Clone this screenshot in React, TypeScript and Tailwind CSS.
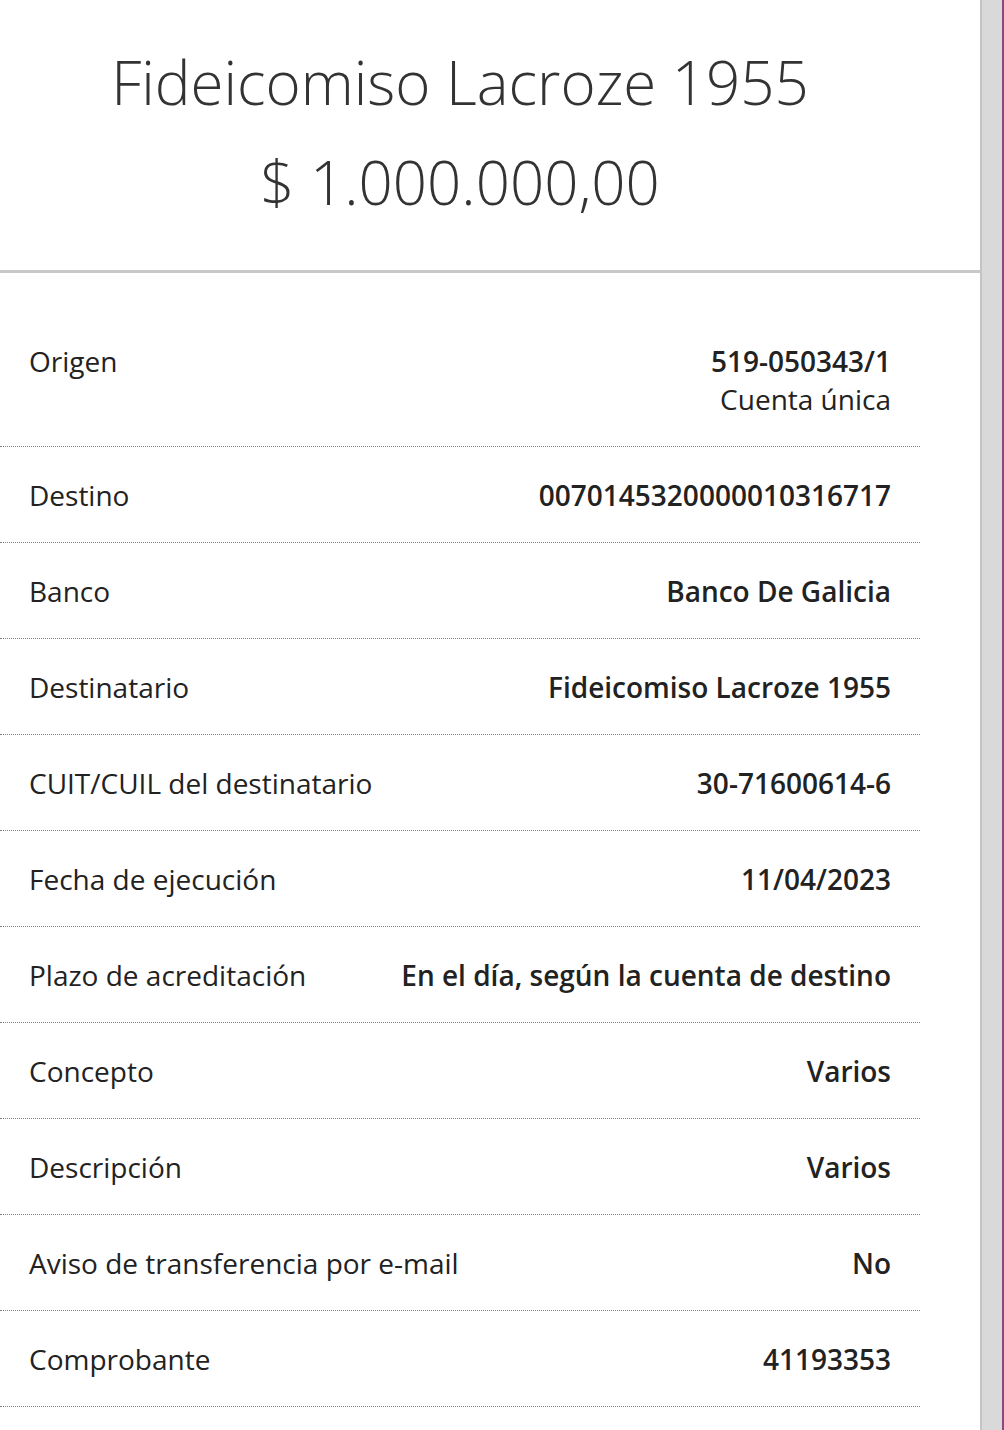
const rows: { label: string; value: string; sub?: string }[] = [
  { label: "Origen", value: "519-050343/1", sub: "Cuenta única" },
  { label: "Destino", value: "0070145320000010316717" },
  { label: "Banco", value: "Banco De Galicia" },
  { label: "Destinatario", value: "Fideicomiso Lacroze 1955" },
  { label: "CUIT/CUIL del destinatario", value: "30-71600614-6" },
  { label: "Fecha de ejecución", value: "11/04/2023" },
  { label: "Plazo de acreditación", value: "En el día, según la cuenta de destino" },
  { label: "Concepto", value: "Varios" },
  { label: "Descripción", value: "Varios" },
  { label: "Aviso de transferencia por e-mail", value: "No" },
  { label: "Comprobante", value: "41193353" },
];

export default function App() {
  return (
    <div className="flex w-[1004px] h-[1430px] overflow-hidden bg-white font-['Open_Sans',sans-serif]">
      {/* Panel principal */}
      <div className="w-[980px] shrink-0">
        <div className="w-[920px] h-[270px] flex flex-col items-center pt-[44px] text-[#333]">
          <h1 className="text-[60px] font-light leading-[76px]">Fideicomiso Lacroze 1955</h1>
          <p className="text-[60px] font-light leading-[76px] mt-[24px]">$ 1.000.000,00</p>
        </div>
        <div className="h-[3px] bg-[#c8c8c8]" />

        <div className="w-[920px] pt-[40px]">
          {rows.map((r) => (
            <div
              key={r.label}
              className="flex justify-between px-[29px] pt-[29px] pb-[28px] border-b border-dotted border-[#808080] text-[28px] leading-[38px] text-[#222]"
            >
              <span>{r.label}</span>
              <div className="text-right">
                <div className="font-semibold">{r.value}</div>
                {r.sub && <div>{r.sub}</div>}
              </div>
            </div>
          ))}
        </div>
      </div>

      {/* Barra lateral */}
      <div className="w-[22px] shrink-0 bg-[#d9d9d9] border-l-2 border-[#c4c4c4]" />
      <div className="flex-1 bg-[#8a4a80]" />
    </div>
  );
}
